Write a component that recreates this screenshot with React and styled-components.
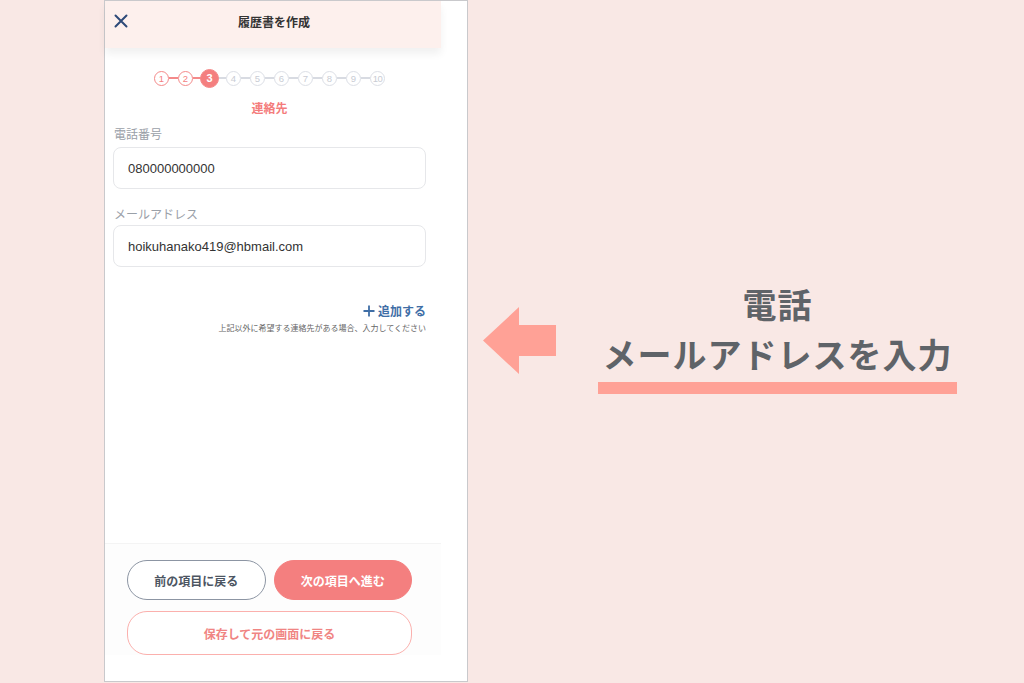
import React from 'react';
import styled, { createGlobalStyle } from 'styled-components';

const GlobalStyle = createGlobalStyle`
  html, body {
    margin: 0;
    padding: 0;
    background: #f9e8e5;
  }
  * {
    box-sizing: border-box;
  }
  body {
    font-family: "Liberation Sans", "Noto Sans CJK JP", sans-serif;
  }
`;

const Page = styled.div`
  width: 1024px;
  height: 683px;
  display: flex;
  background: #f9e8e5;
  overflow: hidden;
`;

const PhoneFrame = styled.div`
  margin-left: 104px;
  width: 364px;
  height: 682px;
  background: #fff;
  border: 1px solid #c9c9cc;
  display: flex;
`;

const AppColumn = styled.div`
  width: 336px;
  height: 100%;
  display: flex;
  flex-direction: column;
`;

const Header = styled.header`
  height: 47px;
  background: #fdf0ed;
  display: flex;
  align-items: center;
  padding: 0 0 7px 8px;
  box-shadow: 0 6px 8px rgba(0, 0, 0, 0.06);
  position: relative;
`;

const CloseButton = styled.button`
  width: 16px;
  height: 16px;
  padding: 0;
  border: 0;
  background: none;
  display: flex;
  align-items: center;
  justify-content: center;
`;

const HeaderTitle = styled.h1`
  flex: 1;
  margin: 0 22px 0 0;
  text-align: center;
  font-family: "Noto Sans CJK JP", sans-serif;
  font-size: 12px;
  font-weight: 700;
  color: #333;
`;

const Content = styled.main`
  flex: 1;
  padding: 20px 15px 0 8px;
  display: flex;
  flex-direction: column;
`;

const Stepper = styled.ol`
  list-style: none;
  margin: 0;
  padding: 0;
  display: flex;
  align-items: center;
  justify-content: center;
  height: 20px;
`;

const StepDot = styled.li`
  width: ${(p) => (p.$active ? '19px' : '15px')};
  height: ${(p) => (p.$active ? '19px' : '15px')};
  margin: ${(p) => (p.$active ? '0 -2px' : '0')};
  border-radius: 50%;
  border: 1.5px solid ${(p) => (p.$done || p.$active ? '#f48a8a' : '#dcdfe6')};
  background: ${(p) => (p.$active ? '#f47f7f' : '#fff')};
  color: ${(p) => (p.$active ? '#fff' : p.$done ? '#f47f7f' : '#c9ccd4')};
  font-size: ${(p) => (p.$active ? '11px' : '9.5px')};
  font-weight: ${(p) => (p.$active ? 700 : 400)};
  display: flex;
  align-items: center;
  justify-content: center;
  letter-spacing: ${(p) => (p.$small ? '-0.5px' : '0')};
  position: relative;
  z-index: 1;
`;

const StepLine = styled.li`
  width: 9px;
  height: 1.5px;
  background: ${(p) => (p.$done ? '#f48a8a' : '#d8dbe2')};
`;

const SectionTitle = styled.h2`
  margin: 12px 0 0;
  text-align: center;
  font-family: "Noto Sans CJK JP", sans-serif;
  font-size: 12px;
  font-weight: 700;
  color: #f47c7c;
  line-height: 16px;
`;

const Field = styled.div`
  margin-top: ${(p) => p.$gap || '10px'};
  display: flex;
  flex-direction: column;
`;

const Label = styled.label`
  font-family: "Noto Sans CJK JP", sans-serif;
  font-size: 12px;
  color: #9aa0a8;
  line-height: 16px;
  padding-left: 1px;
`;

const Input = styled.input`
  margin-top: ${(p) => p.$gap || '5px'};
  height: 42px;
  width: 100%;
  border: 1px solid #e6e7ea;
  border-radius: 8px;
  padding: 0 14px;
  font-family: "Liberation Sans", sans-serif;
  font-size: 13px;
  color: #333;
  background: #fff;
  outline: 0;
`;

const AddRow = styled.div`
  margin-top: 35px;
  display: flex;
  flex-direction: column;
  align-items: flex-end;
`;

const AddButton = styled.button`
  border: 0;
  background: none;
  padding: 0;
  display: flex;
  align-items: center;
  gap: 3px;
  font-family: "Noto Sans CJK JP", sans-serif;
  font-size: 12px;
  font-weight: 700;
  color: #3f6ea6;
`;

const Hint = styled.p`
  margin: 3px 0 0;
  font-family: "Noto Sans CJK JP", sans-serif;
  font-size: 8px;
  color: #666;
  line-height: 11px;
`;

const Footer = styled.footer`
  height: 112px;
  margin-bottom: 26px;
  border-top: 1px solid #f4f4f4;
  background: #fdfdfd;
  padding: 16px 29px 0 22px;
  display: flex;
  flex-direction: column;
  gap: 11px;
`;

const ButtonRow = styled.div`
  display: flex;
  gap: 8px;
`;

const PillButton = styled.button`
  flex: 1;
  height: 40px;
  border-radius: 20px;
  font-family: "Noto Sans CJK JP", sans-serif;
  font-size: 12px;
  font-weight: 700;
  border: 1.5px solid ${(p) => (p.$variant === 'primary' ? '#f47f7f' : p.$variant === 'outlinePink' ? '#fbb0ad' : '#8c95a3')};
  background: ${(p) => (p.$variant === 'primary' ? '#f47f7f' : '#fff')};
  color: ${(p) => (p.$variant === 'primary' ? '#fff' : p.$variant === 'outlinePink' ? '#f08583' : '#4c5562')};
`;

const Callout = styled.section`
  flex: 1;
  display: flex;
  align-items: center;
  padding: 0 0 0 15px;
  margin-top: -2px;
`;

const Arrow = styled.svg`
  flex: none;
  width: 73px;
  height: 67px;
`;

const CalloutText = styled.div`
  margin-left: 42px;
  padding-bottom: 8px;
  display: flex;
  flex-direction: column;
  align-items: center;
`;

const CalloutLine = styled.div`
  font-family: "Noto Sans CJK JP", sans-serif;
  font-size: 34px;
  font-weight: 700;
  color: #5f6368;
  line-height: 50px;
  letter-spacing: 1px;
`;

const Underline = styled.div`
  margin-top: 3px;
  width: 359px;
  height: 12px;
  background: #ffa196;
`;

const steps = [1, 2, 3, 4, 5, 6, 7, 8, 9, 10];
const current = 3;

function App() {
  return (
    <>
      <GlobalStyle />
      <Page>
        <PhoneFrame>
          <AppColumn>
            <Header>
              <CloseButton aria-label="閉じる">
                <svg width="14" height="14" viewBox="0 0 14 14">
                  <path d="M1.5 1.5 L12.5 12.5 M12.5 1.5 L1.5 12.5" stroke="#2d4a78" strokeWidth="2" strokeLinecap="round" />
                </svg>
              </CloseButton>
              <HeaderTitle>履歴書を作成</HeaderTitle>
            </Header>
            <Content>
              <Stepper>
                {steps.map((n, i) => (
                  <React.Fragment key={n}>
                    {i > 0 && <StepLine $done={n <= current} />}
                    <StepDot $active={n === current} $done={n < current} $small={n === 10}>
                      {n}
                    </StepDot>
                  </React.Fragment>
                ))}
              </Stepper>
              <SectionTitle>連絡先</SectionTitle>
              <Field $gap="10px">
                <Label>電話番号</Label>
                <Input defaultValue="080000000000" />
              </Field>
              <Field $gap="17px">
                <Label>メールアドレス</Label>
                <Input $gap="3px" defaultValue="hoikuhanako419@hbmail.com" />
              </Field>
              <AddRow>
                <AddButton>
                  <svg width="12" height="12" viewBox="0 0 12 12">
                    <path d="M6 0.5 V11.5 M0.5 6 H11.5" stroke="#3f6ea6" strokeWidth="1.8" />
                  </svg>
                  追加する
                </AddButton>
                <Hint>上記以外に希望する連絡先がある場合、入力してください</Hint>
              </AddRow>
            </Content>
            <Footer>
              <ButtonRow>
                <PillButton>前の項目に戻る</PillButton>
                <PillButton $variant="primary">次の項目へ進む</PillButton>
              </ButtonRow>
              <PillButton $variant="outlinePink">保存して元の画面に戻る</PillButton>
            </Footer>
          </AppColumn>
        </PhoneFrame>
        <Callout>
          <Arrow viewBox="0 0 73 67">
            <polygon points="0,33.5 36,0 36,18 73,18 73,49 36,49 36,67" fill="#ffa196" />
          </Arrow>
          <CalloutText>
            <CalloutLine>電話</CalloutLine>
            <CalloutLine>メールアドレスを入力</CalloutLine>
            <Underline />
          </CalloutText>
        </Callout>
      </Page>
    </>
  );
}

export default App;
